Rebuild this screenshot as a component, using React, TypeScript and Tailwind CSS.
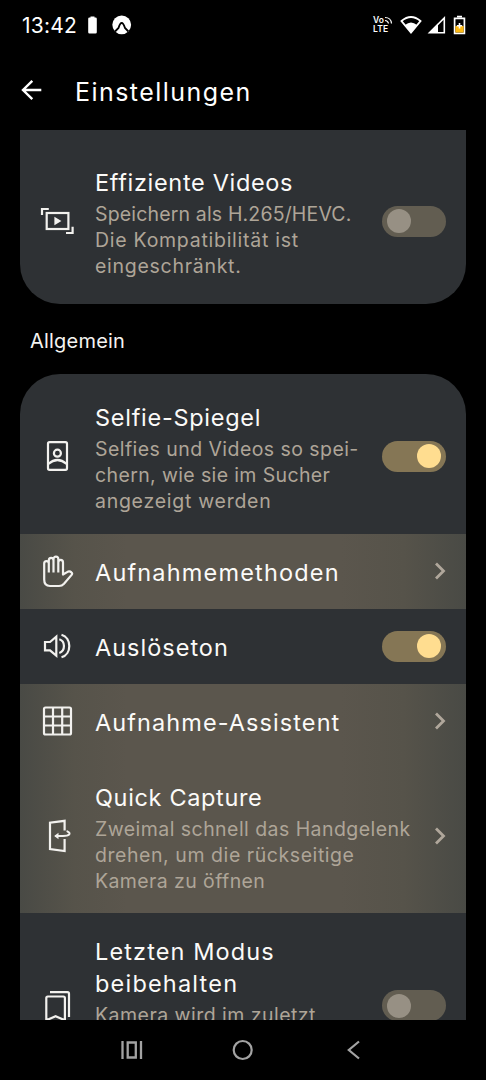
import clsx from "clsx";
import type { ReactNode } from "react";

interface Line {
  text: string;
  tracking?: string;
}

interface RowProps {
  icon: ReactNode;
  title: Line[];
  description?: Line[];
  control: ReactNode;
  className?: string;
}

const Icon = ({ children }: { children: ReactNode }) => (
  <svg
    width="34"
    height="34"
    viewBox="0 0 34 34"
    fill="none"
    stroke="currentColor"
    strokeWidth="2.2"
    className="shrink-0 text-[#f2f1ee]"
  >
    {children}
  </svg>
);

const VideoIcon = () => (
  <Icon>
    <path d="M2 11V5h6.8M26 29h6.6v-6.2" />
    <rect x="6.7" y="9" width="21.7" height="16" />
    <path d="M14.4 12.8l7 4.2-7 4.2z" fill="currentColor" stroke="none" />
  </Icon>
);

const SelfieIcon = () => (
  <Icon>
    <rect x="8" y="3.2" width="19" height="27.6" rx="1.5" />
    <circle cx="17.4" cy="14.2" r="3.5" />
    <path d="M8.3 25Q17.4 17 26.7 25" />
  </Icon>
);

const HandIcon = () => (
  <Icon>
    <path
      strokeLinejoin="round"
      d="M8.8 18.5V9.5C8.8 6.3 4.2 6.3 4.2 9.5V25.5Q4.2 32 10 32H19Q22 32 24 29.8L31.8 20.6Q32.6 19.2 31.4 18.4Q30 17 28 17.6L23 20.5V8.5C23 5 18.3 5 18.3 8.5V18.5M8.8 9.5V6.5C8.8 3 13.5 3 13.5 6.5V18.5M13.5 6.5V5C13.5 1.8 18.3 1.8 18.3 5V8.5"
    />
  </Icon>
);

const SoundIcon = () => (
  <Icon>
    <path d="M5 13h5l6.3-5.3v19L10 21.3H5z" />
    <path d="M19.3 10.2c6.2 2 6.2 11.8 0 13.8M21.5 5.7c10.4 3 10.4 19.6 0 22.6" />
  </Icon>
);

const GridIcon = () => (
  <Icon>
    <rect x="4" y="3.5" width="27" height="27" rx="1.5" />
    <path d="M13 3.500v27M22.2 3.500v27M4 12.500h27M4 21.500h27" />
  </Icon>
);

const FlipIcon = () => (
  <Icon>
    <path d="M24.600 11.500V1.800L10 3.700V30l14.600 2V20" />
    <path d="M16 17h7c6 0 9-2.300 4.300-4.700" strokeWidth="1.900" strokeLinecap="round" />
    <path d="M14.200 17l4.300-3.200v6.400z" fill="currentColor" stroke="none" />
  </Icon>
);

const BookmarksIcon = () => (
  <Icon>
    <path d="M6.300 31.300V9q0-1.500 1.500-1.500h15.600q1.500 0 1.500 1.500v22.300l-9.300-4.100z" />
    <path d="M10 3.200h17.500q1.500 0 1.500 1.500V28" />
  </Icon>
);

const Chevron = () => (
  <svg
    width="12"
    height="18"
    viewBox="0 0 12 18"
    fill="none"
    stroke="#b0a79b"
    strokeWidth="2.8"
    className="shrink-0"
  >
    <path d="M2 1.500L9.500 9 2 16.500" />
  </svg>
);

const Switch = ({ on }: { on?: boolean }) => (
  <div
    role="switch"
    aria-checked={!!on}
    className={clsx(
      "flex h-[31px] w-16 shrink-0 items-center rounded-full px-[5px]",
      on ? "justify-end bg-[#857655]" : "justify-start bg-[#625d51]"
    )}
  >
    <div
      className={clsx(
        "size-6 rounded-full",
        on ? "bg-[#ffdd90]" : "bg-[#979084]"
      )}
    />
  </div>
);

const Lines = ({ lines }: { lines: Line[] }) => (
  <>
    {lines.map((line) => (
      <span key={line.text} className={clsx("block", line.tracking)}>
        {line.text}
      </span>
    ))}
  </>
);

const Row = ({ icon, title, description, control, className }: RowProps) => (
  <div className={clsx("flex w-full items-center pr-5 pl-5", className)}>
    {icon}
    <div className="ml-[21px] w-0 grow self-start pt-[23px] whitespace-nowrap">
      <p className="text-[23.5px] leading-8 text-[#fbfaf8]">
        <Lines lines={title} />
      </p>
      {description && (
        <p className="pt-[2px] text-[19.5px] leading-[26px] text-[#aea598]">
          <Lines lines={description} />
        </p>
      )}
    </div>
    {control}
  </div>
);

const StatusBar = () => (
  <div className="flex h-[50px] shrink-0 items-center pr-5 pl-[22px] text-white">
    <span className="w-[66px] text-[21px] leading-none tracking-[0.2px]">
      13:42
    </span>
    <svg width="10" height="20" viewBox="0 0 10 20" fill="currentColor">
      <path d="M2.500 2.500V1.500h4v1h1q1.300 0 1.300 1.300v13.400q0 1.300-1.300 1.300h-6Q.200 18.500.200 17.200V3.800Q.200 2.500 1.500 2.500z" />
    </svg>
    <svg width="20" height="20" viewBox="0 0 20 20" className="ml-[14px]">
      <circle cx="9.7" cy="9.8" r="9.4" fill="#fff" />
      <path
        d="M3 16.500L6.500 13Q8 8 9.700 8T13 13L16.400 16.500"
        fill="none"
        stroke="#000"
        strokeWidth="1.8"
      />
    </svg>
    <div className="ml-auto flex items-center">
      <div className="relative w-[27px] text-[8.5px] leading-[9px] font-semibold">
        <span className="block">Vo</span>
        <span className="block tracking-[0.2px]">LTE</span>
        <svg
          width="9"
          height="9"
          viewBox="0 0 9 9"
          fill="none"
          stroke="currentColor"
          className="absolute top-0 left-[11px]"
        >
          <path d="M1 1.500q6 0 6.500 6M1 4.500q3 0 3.500 3" strokeWidth="1.2" />
        </svg>
      </div>
      <svg width="22" height="20" viewBox="0 0 22 20">
        <path
          d="M1.500 6Q11 -2 20.500 6L11 17.500z"
          fill="none"
          stroke="#fff"
          strokeWidth="1.8"
        />
        <path d="M5 10q6-5 12 0l-6 7.500z" fill="#fff" />
      </svg>
      <svg width="19" height="20" viewBox="0 0 19 20" className="ml-[5px]">
        <path d="M2.500 17.800L17.300 3v14.800z" fill="none" stroke="#fff" strokeWidth="1.6" />
        <path d="M1.500 18L11 8.500V18z" fill="#fff" />
      </svg>
      <svg width="13" height="20" viewBox="0 0 13 20" className="ml-[7px]">
        <path
          d="M1.600 3.300h9.800v15H1.600zM4 1.500h5"
          fill="none"
          stroke="#fff"
          strokeWidth="1.7"
        />
        <path d="M2.400 11h8.200v6.500H2.400z" fill="#fdb913" />
        <path d="M6.500 8v5.500M3.800 10.800h5.400" stroke="#fff" strokeWidth="1.6" />
      </svg>
    </div>
  </div>
);

const Header = () => (
  <header className="flex h-20 shrink-0 items-center pl-[21px] text-white">
    <svg
      width="22"
      height="22"
      viewBox="0 0 22 22"
      fill="none"
      stroke="currentColor"
      strokeWidth="2.4"
    >
      <path d="M20.300 11H2M11.300 1.800L2 11l9.300 9.200" />
    </svg>
    <h1 className="ml-8 pt-[3px] text-[25px] leading-8 tracking-[1.45px]">
      Einstellungen
    </h1>
  </header>
);

const NavBar = () => (
  <nav className="flex h-[60px] shrink-0 items-center pl-[120px] text-[#a3a3a3]">
    <svg width="23" height="20" viewBox="0 0 23 20" fill="none" stroke="currentColor" strokeWidth="2.3">
      <path d="M2.500 1v18M21 1v18M7.700 2.500h8.100v15H7.700z" />
    </svg>
    <svg
      width="22"
      height="22"
      viewBox="0 0 22 22"
      fill="none"
      stroke="currentColor"
      strokeWidth="2.2"
      className="ml-[89px]"
    >
      <circle cx="10.700" cy="11" r="9" />
    </svg>
    <svg
      width="18"
      height="20"
      viewBox="0 0 18 20"
      fill="none"
      stroke="currentColor"
      strokeWidth="2.2"
      className="ml-[92px]"
    >
      <path d="M13 1.500L2.800 10 13 18.500" />
    </svg>
  </nav>
);

const highlighted =
  "bg-[linear-gradient(to_right,#494a45_0%,#56534a_12%,#5b564d_24%,#5b564d_72%,#56534a_86%,#494a45_100%)]";

const App = () => {
  return (
    <div className="flex h-[1080px] w-[486px] flex-col overflow-hidden bg-black font-[Inter,sans-serif] font-normal">
      <StatusBar />
      <Header />
      <main className="h-[890px] shrink-0 overflow-hidden px-5">
        <section className="h-[173.5px] rounded-b-[40px] bg-[#2e3134] pt-[13.5px]">
          <Row
            className="h-[155px]"
            icon={<VideoIcon />}
            title={[{ text: "Effiziente Videos", tracking: "tracking-[0.67px]" }]}
            description={[
              { text: "Speichern als H.265/HEVC.", tracking: "tracking-[0.16px]" },
              { text: "Die Kompatibilität ist", tracking: "tracking-[0.73px]" },
              { text: "eingeschränkt.", tracking: "tracking-[0.72px]" },
            ]}
            control={<Switch />}
          />
        </section>
        <h2 className="flex h-[70.5px] items-center pt-[5px] pl-[10px] text-[20px] tracking-[0.2px] text-[#f4f3f1]">
          Allgemein
        </h2>
        <section className="rounded-t-[40px] bg-[#2e3134] pt-[5px]">
          <Row
            className="h-[154.5px]"
            icon={<SelfieIcon />}
            title={[{ text: "Selfie-Spiegel", tracking: "tracking-[0.72px]" }]}
            description={[
              { text: "Selfies und Videos so spei-", tracking: "tracking-[0.44px]" },
              { text: "chern, wie sie im Sucher", tracking: "tracking-[0.37px]" },
              { text: "angezeigt werden", tracking: "tracking-[0.73px]" },
            ]}
            control={<Switch on />}
          />
          <Row
            className={clsx("h-[75px]", highlighted)}
            icon={<HandIcon />}
            title={[{ text: "Aufnahmemethoden", tracking: "tracking-[1.17px]" }]}
            control={<Chevron />}
          />
          <Row
            className="h-[75px]"
            icon={<SoundIcon />}
            title={[{ text: "Auslöseton", tracking: "tracking-[1px]" }]}
            control={<Switch on />}
          />
          <div className={highlighted}>
            <Row
              className="h-[75px]"
              icon={<GridIcon />}
              title={[{ text: "Aufnahme-Assistent", tracking: "tracking-[1.08px]" }]}
              control={<Chevron />}
            />
            <Row
              className="h-[154.5px]"
              icon={<FlipIcon />}
              title={[{ text: "Quick Capture", tracking: "tracking-[0.65px]" }]}
              description={[
                { text: "Zweimal schnell das Handgelenk", tracking: "tracking-[0.45px]" },
                { text: "drehen, um die rückseitige", tracking: "tracking-[0.56px]" },
                { text: "Kamera zu öffnen", tracking: "tracking-[0.4px]" },
              ]}
              control={<Chevron />}
            />
          </div>
          <Row
            className="h-[185px]"
            icon={<BookmarksIcon />}
            title={[
              { text: "Letzten Modus", tracking: "tracking-[1.12px]" },
              { text: "beibehalten", tracking: "tracking-[1.2px]" },
            ]}
            description={[
              { text: "Kamera wird im zuletzt", tracking: "tracking-[0.47px]" },
            ]}
            control={<Switch />}
          />
        </section>
      </main>
      <NavBar />
    </div>
  );
};

export default App;
